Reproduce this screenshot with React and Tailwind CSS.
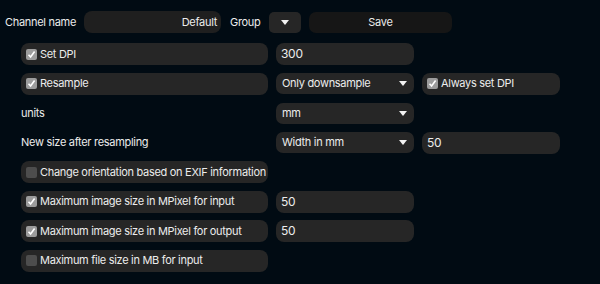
import { useState } from 'react';

const font = { fontFamily: 'Inter, "Noto Sans", sans-serif' };

const Caret = () => (
  <svg width="8" height="5" viewBox="0 0 8 5" className="shrink-0">
    <path d="M0 0 L8 0 L4 5 Z" fill="#f2f2f2" />
  </svg>
);

const Check = ({ on }) => (
  <span
    className={`w-[11px] h-[11px] shrink-0 rounded-[2px] flex items-center justify-center ${
      on ? 'bg-[#9c9c9c]' : 'bg-[#4d4d4d]'
    }`}
  >
    {on && (
      <svg width="9" height="9" viewBox="0 0 9 9">
        <path d="M1.5 4.8 L3.6 7 L7.6 1.5" fill="none" stroke="#fff" strokeWidth="1.6" />
      </svg>
    )}
  </span>
);

const CheckBox = ({ label, checked, width = 'w-[247px]' }) => {
  const [on, setOn] = useState(checked);
  return (
    <button
      onClick={() => setOn(!on)}
      className={`${width} h-[22px] rounded-[8px] bg-[#262626] flex items-center gap-[3px] pl-[5px] text-left whitespace-nowrap`}
    >
      <Check on={on} />
      <span>{label}</span>
    </button>
  );
};

const Field = ({ value }) => (
  <div className="w-[138px] h-[22px] rounded-[8px] bg-[#262626] flex items-center px-[5px] text-[12px]">{value}</div>
);

const Select = ({ value }) => (
  <div className="w-[138px] h-[21px] rounded-[7px] bg-[#262626] flex items-center justify-between pl-[6px] pr-[7px] whitespace-nowrap">
    <span>{value}</span>
    <Caret />
  </div>
);

const Label = ({ text }) => <div className="w-[247px] h-[22px] flex items-center whitespace-nowrap">{text}</div>;

export default function App() {
  return (
    <div
      className="w-[600px] h-[284px] bg-[#010b13] text-[#ececec] text-[11px] tracking-[-0.3px] overflow-hidden"
      style={font}
    >
      <div className="flex items-center h-[22px] mt-[11px] pl-[5px] whitespace-nowrap">
        <span className="w-[79px]">Channel name</span>
        <div className="w-[137px] h-[22px] rounded-[8px] bg-[#1f1f1f] flex items-center justify-end pr-[4px]">
          Default
        </div>
        <span className="ml-[9px] w-[39px]">Group</span>
        <div className="w-[32px] h-[21px] rounded-[5px] bg-[#262626] flex items-center justify-center">
          <Caret />
        </div>
        <button className="ml-[8px] w-[143px] h-[21px] rounded-[7px] bg-[#161616] flex items-center justify-center">
          Save
        </button>
      </div>

      <div className="mt-[10px] pl-[21px] flex flex-col gap-[7.5px]">
        <div className="flex items-center gap-[8px]">
          <CheckBox label="Set DPI" checked />
          <Field value="300" />
        </div>
        <div className="flex items-center gap-[8px]">
          <CheckBox label="Resample" checked />
          <Select value="Only downsample" />
          <CheckBox label="Always set DPI" checked width="w-[138px]" />
        </div>
        <div className="flex items-center gap-[8px]">
          <Label text="units" />
          <Select value="mm" />
        </div>
        <div className="flex items-center gap-[8px]">
          <Label text="New size after resampling" />
          <Select value="Width in mm" />
          <Field value="50" />
        </div>
        <div className="flex items-center gap-[8px]">
          <CheckBox label="Change orientation based on EXIF information" />
        </div>
        <div className="flex items-center gap-[8px]">
          <CheckBox label="Maximum image size in MPixel for input" checked />
          <Field value="50" />
        </div>
        <div className="flex items-center gap-[8px]">
          <CheckBox label="Maximum image size in MPixel for output" checked />
          <Field value="50" />
        </div>
        <div className="flex items-center gap-[8px]">
          <CheckBox label="Maximum file size in MB for input" />
        </div>
      </div>
    </div>
  );
}
